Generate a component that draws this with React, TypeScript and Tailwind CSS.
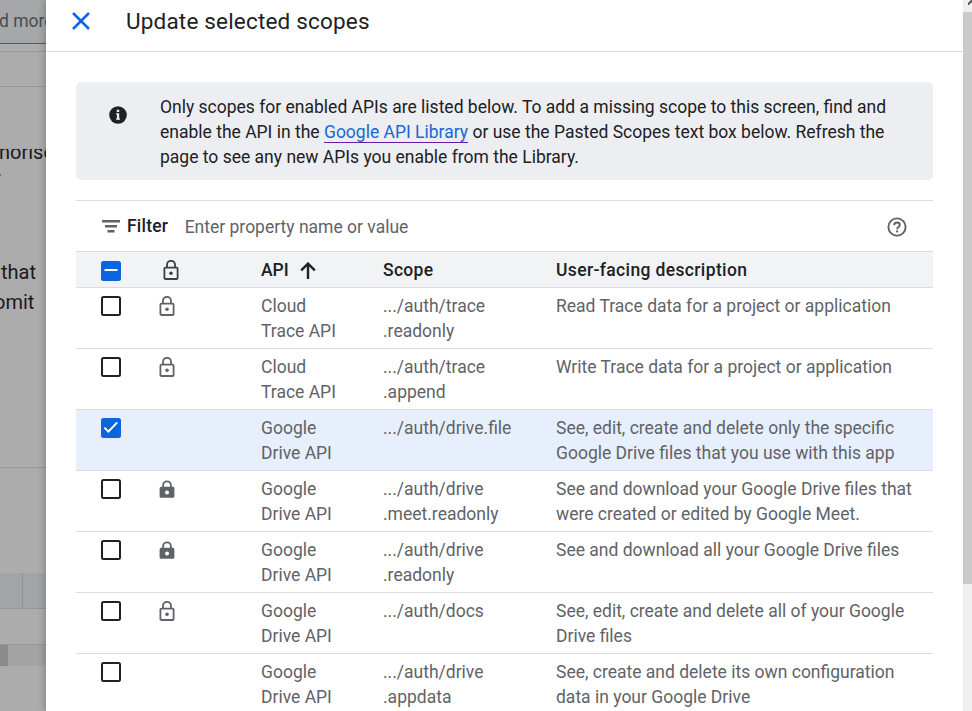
import React from "react";

type LockKind = "open" | "filled" | "none";

interface Row {
  checked?: boolean;
  lock: LockKind;
  api: [string, string];
  scope: string[];
  description: string[];
}

const rows: Row[] = [
  { lock: "open", api: ["Cloud", "Trace API"], scope: [".../auth/trace", ".readonly"], description: ["Read Trace data for a project or application"] },
  { lock: "open", api: ["Cloud", "Trace API"], scope: [".../auth/trace", ".append"], description: ["Write Trace data for a project or application"] },
  { checked: true, lock: "none", api: ["Google", "Drive API"], scope: [".../auth/drive.file"], description: ["See, edit, create and delete only the specific", "Google Drive files that you use with this app"] },
  { lock: "filled", api: ["Google", "Drive API"], scope: [".../auth/drive", ".meet.readonly"], description: ["See and download your Google Drive files that", "were created or edited by Google Meet."] },
  { lock: "filled", api: ["Google", "Drive API"], scope: [".../auth/drive", ".readonly"], description: ["See and download all your Google Drive files"] },
  { lock: "open", api: ["Google", "Drive API"], scope: [".../auth/docs"], description: ["See, edit, create and delete all of your Google", "Drive files"] },
  { lock: "none", api: ["Google", "Drive API"], scope: [".../auth/drive", ".appdata"], description: ["See, create and delete its own configuration", "data in your Google Drive"] },
];

function OpenLock({ className }: { className: string }) {
  return (
    <svg className={className} width="16" height="20" viewBox="0 0 16 20" fill="none" stroke="currentColor" strokeWidth="1.8">
      <rect x="1.4" y="7.6" width="13.2" height="11.4" rx="1" />
      <path d="M4 7.6V4.8a4 4 0 0 1 8 0v2.8" />
      <circle cx="8" cy="13.2" r="1.8" fill="currentColor" stroke="none" />
    </svg>
  );
}

function FilledLock({ className }: { className: string }) {
  return (
    <svg className={className} width="16" height="20" viewBox="0 0 16 20" fill="none">
      <path d="M4.1 8.4V6.2a3.9 3.9 0 0 1 7.8 0v2.2" stroke="currentColor" strokeWidth="1.8" />
      <path fillRule="evenodd" fill="currentColor" d="M2.2 7.8h11.6c.9 0 1.6.7 1.6 1.6v7.8c0 .9-.7 1.6-1.6 1.6H2.2c-.9 0-1.6-.7-1.6-1.6V9.4c0-.9.7-1.6 1.6-1.6ZM8 11.4a2 2 0 1 0 0 4 2 2 0 0 0 0-4Z" />
    </svg>
  );
}

function Checkbox({ state }: { state: "on" | "off" | "mixed" }) {
  if (state === "off") {
    return <span className="block size-5 rounded-[2.5px] border-2 border-[#202124] bg-white" />;
  }
  return (
    <span className="block size-5 rounded-[2.5px] bg-[#0b65df]">
      <svg width="20" height="20" viewBox="0 0 20 20" fill="none" stroke="#fff" strokeWidth="2">
        {state === "on" ? <path d="m3.4 9.6 4 4 8.8-9.2" /> : <path d="M3.5 9h13" />}
      </svg>
    </span>
  );
}

function Lines({ items }: { items: string[] }) {
  return (
    <>
      {items.map((line) => (
        <div key={line} className="whitespace-nowrap">{line}</div>
      ))}
    </>
  );
}

const columns = "grid grid-cols-[25px_58px_102px_122px_173px_1fr]";

function Backdrop() {
  return (
    <div className="flex h-full w-[46px] shrink-0 flex-col overflow-hidden bg-[#acacac] whitespace-nowrap text-[#1b1b1d]">
      <div className="h-[44px] border-b border-[#59595b] bg-[#a6a7a9] pt-[9px] text-[17.5px] leading-[25px] text-[#4a4c50]">
        <div className="ml-[-1px]">d more</div>
      </div>
      <div className="h-[8px] border-b border-[#969799]" />
      <div className="h-[35px] border-b border-[#969799]" />
      <div className="h-[61px]" />
      <div className="h-[30px] overflow-hidden border-t border-[#a4a4a5]">
        <div className="mt-[-11px] -ml-px text-[20px] leading-[29px]">norise</div>
        <div className="mt-[7px] h-[2px] w-px bg-[#6b6b6c]" />
      </div>
      <div className="h-[79px]" />
      <div className="flex h-[60px] flex-col text-[20px] leading-[30px]">
        <div className="pl-[1px]">that</div>
        <div className="-ml-[6px]">omit</div>
      </div>
      <div className="h-[151px] border-b border-[#969799]" />
      <div className="h-[105px]" />
      <div className="flex h-[36px] border-b border-[#929496] bg-[#a2a4a6]">
        <div className="w-[23px] border-r border-[#929496]" />
      </div>
      <div className="h-[36px] border-b border-[#969799]" />
      <div className="flex h-[21px] bg-[#a3a3a3]">
        <div className="w-[8px] bg-[#8a8a8a]" />
      </div>
    </div>
  );
}

export default function App() {
  return (
    <div className="flex h-[711px] w-[972px] overflow-hidden bg-white font-['Roboto',sans-serif] text-[17.5px] leading-[25px] text-[#5f6368]">
      <Backdrop />
      <main className="z-10 flex h-full w-[917px] shrink-0 flex-col overflow-hidden bg-white shadow-[-1px_0_7px_rgba(0,0,0,0.25)]">
        <header className="flex h-[52px] shrink-0 items-start border-b border-[#dadce0] pl-[26px]">
          <svg className="mt-[12px]" width="18" height="18" viewBox="0 0 18 18" stroke="#0b65e8" strokeWidth="2.5">
            <path d="m1 1 16 16M17 1 1 17" />
          </svg>
          <h1 className="mt-[5px] ml-[36px] text-[22.5px] leading-[32px] tracking-[0.18px] whitespace-nowrap text-[#202124]">Update selected scopes</h1>
        </header>
        <div className="pt-[30px] pl-[30px]">
          <section className="flex h-[98px] w-[857px] rounded-[5px] bg-[#edeef2] pt-[13px] text-[#202124]">
            <svg className="mt-[11px] ml-[33px]" width="18" height="18" viewBox="0 0 18 18">
              <circle cx="9" cy="9" r="8.8" fill="#202124" />
              <path d="M7.8 3.8h2.4v2.3H7.8zM7 7.3h3.2v5.2h.8v1.3H7v-1.3h.9V8.6H7z" fill="#edeef2" />
            </svg>
            <div className="ml-[33px] whitespace-nowrap">
              <div>Only scopes for enabled APIs are listed below. To add a missing scope to this screen, find and</div>
              <div>
                enable the API in the{" "}
                <a className="border-b border-[#681da8] text-[#1967d2]">Google API Library</a> or use the Pasted Scopes text box below. Refresh the
              </div>
              <div>page to see any new APIs you enable from the Library.</div>
            </div>
          </section>
          <section className="mt-[20px] w-[857px]">
            <div className="flex h-[51px] items-center border-t border-[#dadce0] pl-[26px]">
              <svg width="18" height="13" viewBox="0 0 18 13" fill="#5f6368">
                <path d="M0 0h18v2.4H0zM3 5h12v2.4H3zM5.5 10h7v2.4h-7z" />
              </svg>
              <span className="mt-px ml-[7px] font-medium tracking-[0.2px] text-[#202124]">Filter</span>
              <span className="mt-[2px] ml-[16.5px]">Enter property name or value</span>
              <svg className="mt-px mr-[26px] ml-auto" width="20" height="20" viewBox="0 0 20 20" fill="none" stroke="#5f6368" strokeWidth="1.9">
                <circle cx="10" cy="10" r="8.6" />
                <path d="M7.2 8.2c0-1.6 1.2-2.7 2.8-2.7s2.8 1 2.8 2.5c0 2-2.7 2.1-2.7 4.2" />
                <path d="M9.1 13.4h2v2h-2z" fill="#5f6368" stroke="none" />
              </svg>
            </div>
            <div className={`${columns} h-[37px] border-y border-[#dadce0] bg-[#f1f3f4] pt-[6px] font-medium text-[#202124]`}>
              <span />
              <div className="pt-[3px]"><Checkbox state="mixed" /></div>
              <OpenLock className="mt-[2px] ml-[4px] text-[#3c4043]" />
              <div className="flex">
                API
                <svg className="mt-[4px] ml-[11px]" width="16" height="17" viewBox="0 0 16 17" fill="none" stroke="#202124" strokeWidth="2.4">
                  <path d="M8 17V1.7M1.2 8.4 8 1.6l6.8 6.8" />
                </svg>
              </div>
              <span className="tracking-[0.3px]">Scope</span>
              <span className="tracking-[0.36px]">User-facing description</span>
            </div>
            {rows.map((row, index) => (
              <div key={index} className={`${columns} h-[61px] border-b border-[#dadce0] pt-[6px] ${row.checked ? "bg-[#e8effc]" : ""}`}>
                <span />
                <div className="pt-[2px]"><Checkbox state={row.checked ? "on" : "off"} /></div>
                <div className="pt-[2px]">
                  {row.lock === "open" && <OpenLock className="text-[#5f6368]" />}
                  {row.lock === "filled" && <FilledLock className="text-[#5f6368]" />}
                </div>
                <div><Lines items={row.api} /></div>
                <div><Lines items={row.scope} /></div>
                <div><Lines items={row.description} /></div>
              </div>
            ))}
          </section>
        </div>
      </main>
      <aside className="z-20 flex h-full w-[9px] shrink-0 flex-col bg-[#efefef]">
        <div className="flex h-[12px] overflow-hidden pl-[5px]">
          <svg width="4" height="5" viewBox="0 0 4 5" fill="#555"><path d="M0 3 3 0h1v2L1 5H0z" /></svg>
        </div>
        <div className="h-[572px] bg-[#cacaca]" />
      </aside>
    </div>
  );
}
